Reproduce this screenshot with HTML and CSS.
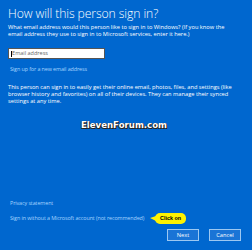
FILE: index.html
```html
<!DOCTYPE html>
<html>
<head>
<meta charset="utf-8">
<link rel="stylesheet" href="styles.css">
</head>
<body>
<div class="page">
  <h1 class="title">How will this person sign in?</h1>
  <p class="intro">What email address would this person like to sign in to Windows? (If you know the email address they use to sign in to Microsoft services, enter it here.)</p>
  <div class="input"><span class="caret"></span><span class="ph">Email address</span></div>
  <a class="link signup">Sign up for a new email address</a>
  <p class="desc">This person can sign in to easily get their online email, photos, files, and settings (like browser history and favorites) on all of their devices. They can manage their synced settings at any time.</p>
  <div class="watermark">ElevenForum.com</div>
  <div class="spacer"></div>
  <a class="link privacy">Privacy statement</a>
  <div class="without-row">
    <a class="link without">Sign in without a Microsoft account (not recommended)</a>
    <div class="callout"><span class="tail"></span>Click on</div>
  </div>
  <div class="buttons">
    <button class="btn next">Next</button>
    <button class="btn cancel">Cancel</button>
  </div>
</div>
</body>
</html>
```
FILE: styles.css
```css
html, body {
  margin: 0;
  padding: 0;
}
body {
  width: 252px;
  height: 250px;
  background: #0067cf;
  font-family: "Open Sans", "Noto Sans", sans-serif;
  color: #ffffff;
  overflow: hidden;
}
.page {
  box-sizing: border-box;
  height: 250px;
  width: 252px;
  padding: 6px 16px 0 8px;
  display: flex;
  flex-direction: column;
  align-items: flex-start;
}
.title {
  margin: 0;
  font-weight: 300;
  font-size: 12.2px;
  line-height: 15px;
  letter-spacing: -0.1px;
}
.intro, .desc {
  margin: 3px 0 0 0;
  font-size: 5.7px;
  line-height: 7px;
}
.input {
  box-sizing: border-box;
  margin-top: 10px;
  width: 97px;
  height: 11px;
  background: #ffffff;
  border: 1px solid #555;
  display: flex;
  align-items: center;
  padding-left: 2px;
}
.caret {
  width: 0.6px;
  height: 6px;
  background: #000;
  margin-right: 0.5px;
}
.ph {
  color: #666;
  font-size: 5.5px;
  line-height: 7px;
}
.link {
  color: #a6d4ff;
  font-size: 5.4px;
  line-height: 7px;
  letter-spacing: -0.1px;
  margin-left: 2px;
}
.signup {
  margin-top: 7px;
}
.desc {
  margin-top: 11px;
}
.watermark {
  align-self: center;
  margin: 15px 0 0 4px;
  font-family: "DejaVu Sans", sans-serif;
  font-weight: bold;
  font-size: 8.6px;
  line-height: 10px;
  color: #ffffff;
  text-shadow: 1px 1px 0 #222, -0.5px -0.5px 0 #333, 0.5px -0.5px 0 #333, -0.5px 0.5px 0 #333;
}
.spacer {
  flex: 1;
}
.privacy {
  margin-bottom: 8px;
}
.without-row {
  position: relative;
  display: flex;
  align-items: center;
}
.callout {
  position: absolute;
  left: 147px;
  top: -2px;
  height: 11px;
  padding: 0 5px;
  background: #fff200;
  color: #000;
  border-radius: 5px;
  font-family: "Liberation Sans", sans-serif;
  font-weight: bold;
  font-size: 5.4px;
  line-height: 11px;
  white-space: nowrap;
}
.tail {
  position: absolute;
  left: -5px;
  top: 3px;
  width: 0;
  height: 0;
  border-top: 2px solid transparent;
  border-bottom: 3px solid transparent;
  border-right: 6px solid #fff200;
}
.buttons {
  align-self: flex-end;
  display: flex;
  gap: 10px;
  margin: 7px -5px 9px 0;
}
.btn {
  box-sizing: border-box;
  width: 32px;
  height: 12px;
  padding: 0;
  background: #1a74d6;
  border: 1px solid #9cc8f2;
  color: #ffffff;
  font-family: "Open Sans", sans-serif;
  font-size: 5.7px;
  line-height: 10px;
}
```
